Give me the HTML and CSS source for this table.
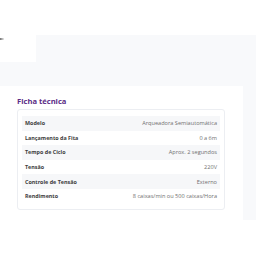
FILE: index.html
```html
<!DOCTYPE html>
<html lang="pt">
<head>
<meta charset="utf-8">
<link rel="stylesheet" href="styles.css">
</head>
<body>
<div class="top"></div>
<section class="band">
  <div class="thumb"><span class="mark"></span></div>
  <div class="card-row">
    <div class="card">
      <h2 class="title">Ficha técnica</h2>
      <div class="specs">
        <div class="row alt"><span class="label">Modelo</span><span class="value">Arqueadora Semiautomática</span></div>
        <div class="row"><span class="label">Lançamento da Fita</span><span class="value">0 a 6m</span></div>
        <div class="row alt"><span class="label">Tempo de Ciclo</span><span class="value">Aprox. 2 segundos</span></div>
        <div class="row"><span class="label">Tensão</span><span class="value">220V</span></div>
        <div class="row alt"><span class="label">Controle de Tensão</span><span class="value">Externo</span></div>
        <div class="row"><span class="label">Rendimento</span><span class="value">8 caixas/min ou 500 caixas/Hora</span></div>
      </div>
    </div>
  </div>
</section>
</body>
</html>
```
FILE: styles.css
```css
html, body {
  margin: 0;
  padding: 0;
  background: #ffffff;
  font-family: "Open Sans", "Liberation Sans", sans-serif;
}
.top {
  height: 35px;
}
.band {
  background: #f8f9fb;
  height: 185px;
  display: flex;
  flex-direction: column;
}
.thumb {
  width: 36px;
  height: 27px;
  background: #ffffff;
  position: relative;
}
.mark {
  position: absolute;
  left: 0;
  top: 3px;
  width: 4px;
  height: 2px;
  background: linear-gradient(to right, #6f6f6f, rgba(190,190,190,0.3));
}
.card-row {
  margin-top: 24px;
  display: flex;
  padding-right: 13px;
  flex: 1;
}
.card {
  flex: 1;
  background: #ffffff;
  padding: 9px 18px 0 17px;
}
.title {
  margin: 0 0 2px;
  font-size: 7.6px;
  line-height: 12px;
  font-weight: 700;
  color: #5b2c86;
}
.specs {
  border: 1px solid #eceef2;
  border-radius: 3px;
  padding: 6px 4px 5px;
}
.row {
  height: 14.6px;
  display: flex;
  align-items: center;
  justify-content: space-between;
  padding: 0 3px;
  font-size: 5.6px;
}
.row.alt {
  background: #f6f7f9;
}
.label {
  font-size: 5.4px;
  font-weight: 700;
  color: #3d3d3d;
}
.value {
  color: #707070;
}
```
